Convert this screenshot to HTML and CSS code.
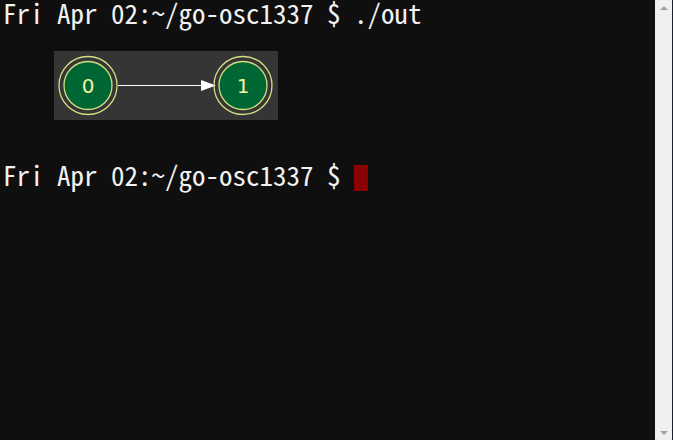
FILE: index.html
```html
<!DOCTYPE html>
<html>
<head>
<meta charset="utf-8">
<link rel="stylesheet" href="styles.css">
</head>
<body>
<div class="window">
  <div class="term">
    <div class="line">Fri Apr 02:~/go-osc1337 $ ./out</div>
    <div class="figure">
      <svg width="224" height="69" viewBox="0 0 224 69" xmlns="http://www.w3.org/2000/svg">
        <rect x="0" y="0" width="224" height="69" fill="#353535"/>
        <circle cx="34" cy="34.5" r="29" fill="none" stroke="#d6dc82" stroke-width="1.3"/>
        <circle cx="34" cy="34.5" r="24" fill="#006633" stroke="#d6dc82" stroke-width="1.3"/>
        <text x="34" y="41.5" text-anchor="middle" class="label">0</text>
        <line x1="64" y1="34.5" x2="148" y2="34.5" stroke="#ffffff" stroke-width="1.2"/>
        <polygon points="147,29 162,34.5 147,40" fill="#ffffff"/>
        <circle cx="189" cy="34.5" r="29" fill="none" stroke="#d6dc82" stroke-width="1.3"/>
        <circle cx="189" cy="34.5" r="24" fill="#006633" stroke="#d6dc82" stroke-width="1.3"/>
        <text x="189" y="41.5" text-anchor="middle" class="label">1</text>
      </svg>
    </div>
    <div class="line">Fri Apr 02:~/go-osc1337 $ <span class="cursor"> </span></div>
  </div>
  <div class="scrollbar">
    <div class="arrow up"></div>
    <div class="arrow down"></div>
  </div>
  <div class="edge"></div>
</div>
</body>
</html>
```
FILE: styles.css
```css
html, body {
  margin: 0;
  padding: 0;
  background: #0f0f0f;
}
.window {
  display: flex;
  width: 673px;
  height: 440px;
  overflow: hidden;
}
.term {
  flex: 1;
  padding: 1px 0 0 3px;
  color: #f2f2f2;
  font-family: "Noto Sans Mono CJK JP", "Noto Sans CJK JP", "DejaVu Sans Mono", monospace;
  font-size: 27px;
}
.line {
  height: 23px;
  line-height: 23px;
  padding-bottom: 4px;
  white-space: pre;
}
.figure {
  padding: 23px 0 0 51px;
  height: 69px;
  margin-bottom: 43px;
  line-height: 0;
}
.label {
  font-family: "DejaVu Sans", sans-serif;
  font-size: 20px;
  fill: #f4f0a4;
}
.cursor {
  display: inline-block;
  width: 14px;
  height: 26px;
  background: #8b0000;
  vertical-align: -2px;
}
.scrollbar {
  width: 17px;
  background: #f0f0f0;
  display: flex;
  flex-direction: column;
  justify-content: space-between;
  align-items: center;
  padding: 6px 0 5px;
  box-sizing: border-box;
}
.arrow {
  width: 0;
  height: 0;
  border-left: 4px solid transparent;
  border-right: 4px solid transparent;
}
.arrow.up {
  border-bottom: 4px solid #a3a3a3;
}
.arrow.down {
  border-top: 4px solid #a3a3a3;
}
.edge {
  width: 1px;
  background: #1a2230;
}
```
